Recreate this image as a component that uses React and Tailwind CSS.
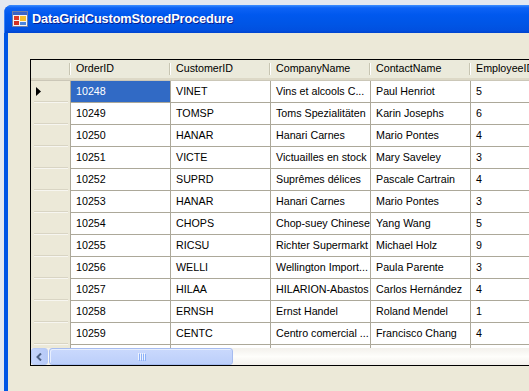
import React from "react";

const rows = [
  ["10248", "VINET", "Vins et alcools C...", "Paul Henriot", "5"],
  ["10249", "TOMSP", "Toms Spezialitäten", "Karin Josephs", "6"],
  ["10250", "HANAR", "Hanari Carnes", "Mario Pontes", "4"],
  ["10251", "VICTE", "Victuailles en stock", "Mary Saveley", "3"],
  ["10252", "SUPRD", "Suprêmes délices", "Pascale Cartrain", "4"],
  ["10253", "HANAR", "Hanari Carnes", "Mario Pontes", "3"],
  ["10254", "CHOPS", "Chop-suey Chinese", "Yang Wang", "5"],
  ["10255", "RICSU", "Richter Supermarkt", "Michael Holz", "9"],
  ["10256", "WELLI", "Wellington Import...", "Paula Parente", "3"],
  ["10257", "HILAA", "HILARION-Abastos", "Carlos Hernández", "4"],
  ["10258", "ERNSH", "Ernst Handel", "Roland Mendel", "1"],
  ["10259", "CENTC", "Centro comercial ...", "Francisco Chang", "4"],
];

const headers = ["OrderID", "CustomerID", "CompanyName", "ContactName", "EmployeeID"];

function AppIcon() {
  return (
    <svg width="16" height="16" viewBox="0 0 16 16" className="shrink-0">
      <rect x="0.5" y="0.5" width="15" height="15" fill="#f4f4f4" stroke="#6f7fa8" />
      <rect x="1" y="1" width="14" height="3" fill="#3a64c8" />
      <rect x="2" y="5" width="5" height="4" fill="#e03a2a" />
      <rect x="2" y="10" width="5" height="4" fill="#d23224" />
      <rect x="8" y="5" width="6" height="5" fill="#f6c02c" />
      <rect x="8" y="11" width="6" height="3" fill="#4a86e0" />
    </svg>
  );
}

function HeaderCell({ label }) {
  return (
    <div className="relative w-[100px] shrink-0 h-full flex items-center pl-[5px] pb-[3px] text-black whitespace-nowrap">
      {label}
      <div className="absolute right-0 top-[3px] bottom-[5px] w-[2px] flex">
        <div className="w-[1px] bg-[#C7C5B2]" />
        <div className="w-[1px] bg-white" />
      </div>
    </div>
  );
}

export default function App() {
  return (
    <div className="w-[529px] h-[391px] overflow-hidden bg-[#E3E8F0] pl-[4px] pt-[5px] font-['Liberation_Sans',_Arial,_sans-serif] text-[10.7px]">
      <div className="w-[600px] h-[420px] rounded-tl-[8px] bg-[#0055E5] flex flex-col overflow-hidden">
        {/* title bar */}
        <div className="h-[28px] shrink-0 flex items-center pl-[7px] gap-[4px] bg-[linear-gradient(to_bottom,#3D8FFF_0%,#0D63F5_10%,#0058EE_35%,#0055E5_70%,#0150E0_90%,#0044CF_100%)] border-l border-[#3B82F7]">
          <AppIcon />
          <span className="text-white font-bold text-[12.8px] tracking-[-0.15px] [text-shadow:1px_1px_0_#0A1E8F] font-['Liberation_Sans',_Arial,_sans-serif]">
            DataGridCustomStoredProcedure
          </span>
        </div>
        {/* client area */}
        <div className="flex-1 ml-[4px] bg-[#ECE9D8] pt-[26px] pl-[22px]">
          <div className="w-[540px] h-[307px] border border-black bg-[#ECE9D8] flex flex-col overflow-hidden">
            {/* header row */}
            <div className="h-[21px] shrink-0 flex bg-[#EBEADB] border-b border-[#CBC7B8] shadow-[inset_0_-2px_0_#DDD9C7]">
              <div className="relative w-[40px] shrink-0 h-full">
                <div className="absolute right-0 top-[3px] bottom-[5px] w-[2px] flex">
                  <div className="w-[1px] bg-[#C7C5B2]" />
                  <div className="w-[1px] bg-white" />
                </div>
              </div>
              {headers.map((h) => (
                <HeaderCell key={h} label={h} />
              ))}
            </div>
            {/* rows */}
            {rows.map((r, i) => (
              <div key={r[0]} className="h-[22px] shrink-0 flex">
                <div className="relative w-[40px] shrink-0 h-full bg-[#ECE9D8] border-r border-[#ACA899] flex items-center pl-[5px]">
                  {i === 0 && (
                    <svg width="5" height="9" viewBox="0 0 5 9" className="mb-[1px]">
                      <path d="M0 0 L5 4.5 L0 9 Z" fill="#000" />
                    </svg>
                  )}
                  <div className="absolute left-[3px] right-[2px] bottom-0 h-[2px] flex flex-col">
                    <div className="h-[1px] bg-[#D9D5C4]" />
                    <div className="h-[1px] bg-[#F7F6F0]" />
                  </div>
                </div>
                {r.map((c, j) => (
                  <div
                    key={j}
                    className={
                      "w-[100px] shrink-0 h-full border-r border-b border-[#ACA899] flex items-center pl-[5px] whitespace-nowrap overflow-hidden " +
                      (i === 0 && j === 0 ? "bg-[#316AC5] text-white" : "bg-white text-black")
                    }
                  >
                    {c}
                  </div>
                ))}
              </div>
            ))}
            {/* partial row */}
            <div className="h-[3px] shrink-0 flex overflow-hidden">
              <div className="w-[40px] shrink-0 h-full bg-[#ECE9D8] border-r border-[#ACA899]" />
              {[0, 1, 2, 3, 4].map((k) => (
                <div key={k} className="w-[100px] shrink-0 h-full border-r border-[#ACA899] bg-white" />
              ))}
            </div>
            {/* horizontal scrollbar */}
            <div className="h-[17px] shrink-0 flex bg-[linear-gradient(to_bottom,#F3F1EC_0%,#FEFEFB_50%,#F3F1EC_100%)]">
              <div className="w-[17px] h-[17px] shrink-0 rounded-[3px] border border-[#B7CAF5] bg-[linear-gradient(to_right,#C5D5FC,#B6C9F7)] flex items-center justify-center">
                <svg width="7" height="8" viewBox="0 0 7 8">
                  <path d="M5 0.5 L1.5 4 L5 7.5" fill="none" stroke="#4D6185" strokeWidth="2" />
                </svg>
              </div>
              <div className="w-[1px] shrink-0" />
              <div className="w-[184px] h-[17px] shrink-0 rounded-[3px] border border-[#A6BCF0] bg-[linear-gradient(to_bottom,#CAD9FD,#BCCFFA)] shadow-[inset_1px_1px_0_#E6EEFE] flex items-center justify-center gap-[1px]">
                {[0, 1, 2, 3].map((k) => (
                  <div key={k} className="w-[1px] h-[7px] bg-[#EEF4FE] shadow-[1px_1px_0_#8CB0F8]" />
                ))}
              </div>
              <div className="flex-1" />
            </div>
          </div>
        </div>
      </div>
    </div>
  );
}
